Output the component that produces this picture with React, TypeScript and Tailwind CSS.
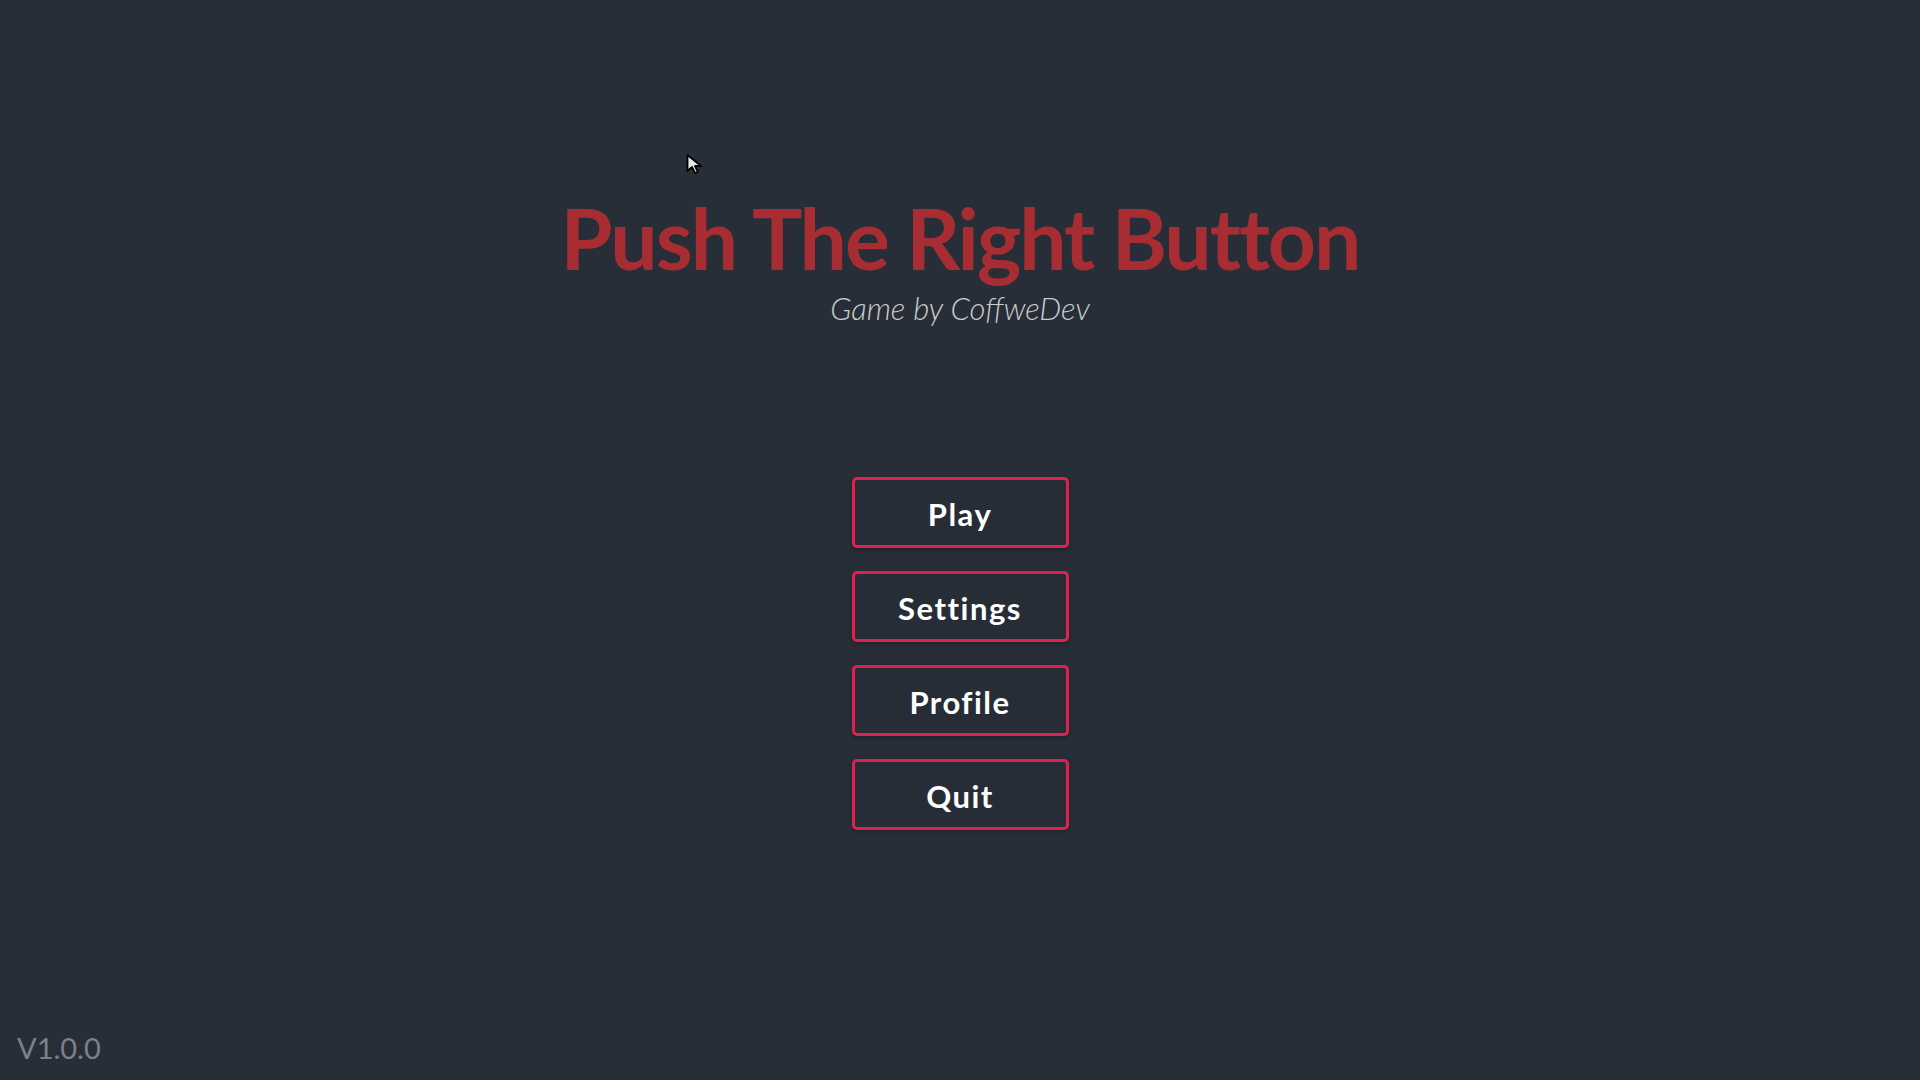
const menuItems = ["Play", "Settings", "Profile", "Quit"];

const Cursor = () => (
    <svg width="20" height="22" viewBox="0 0 20 22" className="absolute left-[685px] top-[153px]">
        <path d="M2.5 2 L2.5 18 L7 14 L10 20 L12.8 18.8 L10 13 L16 13 Z" fill="#e6e6e6" stroke="#000" strokeWidth="1.8"
              strokeLinejoin="round"/>
    </svg>
);

const App = () => {
    return (
        <div className="relative w-full h-screen bg-[#282e37] flex flex-col items-center overflow-hidden font-['Lato',sans-serif]">
            <Cursor/>
            <div className="flex flex-col items-center mt-[188px]">
                <h1 className="text-[#a82d33] text-[84px] leading-[100px] font-bold tracking-[-2px]">
                    Push The Right Button
                </h1>
                <span className="text-[#c9cbce] text-[31px] italic font-light leading-[30px] mt-[5px]">
                    Game by CoffweDev
                </span>
            </div>
            <div className="flex flex-col gap-[23px] mt-[154px]">
                {menuItems.map((item, index) => (
                    <button key={index}
                            className="w-[217px] h-[71px] pt-[3px] border-[3px] border-[#e0204f] rounded-[5px] bg-[#272d36] text-white text-[31px] font-bold tracking-[1.5px] flex items-center justify-center shadow-[0_2px_4px_rgba(0,0,0,0.25)]">
                        {item}
                    </button>
                ))}
            </div>
            <div className="mt-auto self-start pl-[17px] pb-[11px] text-[#7c8087] text-[29px]">
                V1.0.0
            </div>
        </div>
    );
}

export default App;
